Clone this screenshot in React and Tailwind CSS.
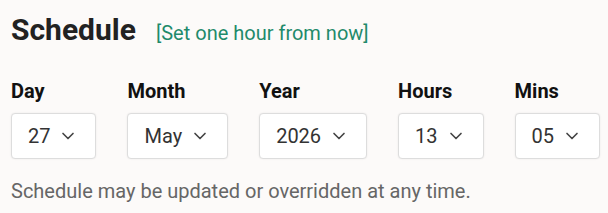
import { ChevronDown } from 'lucide-react'

const fields = [
  { label: 'Day', value: '27' },
  { label: 'Month', value: 'May' },
  { label: 'Year', value: '2026' },
  { label: 'Hours', value: '13' },
  { label: 'Mins', value: '05' },
]

export default function App() {
  return (
    <div
      className="w-[608px] h-[213px] bg-[#fcfaf9] pl-[11px] pt-[12px]"
      style={{ fontFamily: 'Roboto, "Liberation Sans", sans-serif' }}
    >
      <div className="flex items-baseline gap-[20px]">
        <h2 className="text-[30px] font-bold text-[#222] leading-[36px]">Schedule</h2>
        <a href="#" className="text-[20px] text-[#1f8a6b] no-underline">
          [Set one hour from now]
        </a>
      </div>

      <div className="flex gap-[31px] mt-[31px]">
        {fields.map((f) => (
          <div key={f.label} className="flex flex-col">
            <label className="text-[20px] font-bold text-[#111] leading-[24px]">{f.label}</label>
            <div className="mt-[10px] h-[46px] flex items-center gap-[8px] pl-[16px] pr-[17px] bg-white border border-[#dddddd] rounded-[4px] shadow-[0_0_2px_rgba(0,0,0,0.08)]">
              <span className="text-[20px] text-[#333]">{f.value}</span>
              <ChevronDown size={20} strokeWidth={2} className="text-[#444]" />
            </div>
          </div>
        ))}
      </div>

      <p className="mt-[20px] text-[20px] text-[#666] leading-[24px]">
        Schedule may be updated or overridden at any time.
      </p>
    </div>
  )
}
